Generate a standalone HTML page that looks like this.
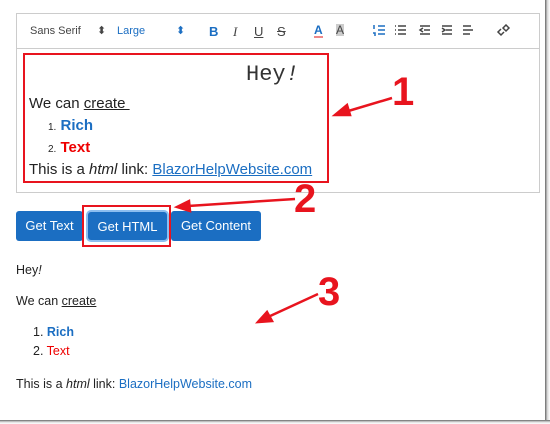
<!DOCTYPE html>
<html><head><style>
*{box-sizing:border-box}
body{margin:0;width:550px;height:424px;background:#fff;font-family:"Liberation Sans",sans-serif;position:relative;overflow:hidden}
.a{position:absolute}
.tb{left:16px;top:13px;width:524px;height:36px;border:1px solid #ccc}
.ed{left:16px;top:48px;width:524px;height:145px;border:1px solid #ccc}
.t{font-size:11px;color:#444}
.btn{background:#1b6ec2;color:#fff;font-size:13px;border-radius:3px;height:30px;line-height:30px;text-align:center;top:211px}
.big{font-weight:bold;color:#e8141e;font-family:"Liberation Sans",sans-serif;font-size:40px}
</style></head><body>
<div class="a tb"></div>
<div class="a ed"></div>
<div class="a t" style="left:30px;top:25px">Sans Serif</div>
<div class="a t" style="left:97px;top:24px">⬍</div>
<div class="a t" style="left:117px;top:25px;color:#1b6ec2">Large</div>
<div class="a t" style="left:176px;top:24px;color:#1b6ec2">⬍</div>
<div class="a" style="left:209px;top:24px;font-weight:bold;font-size:13px;color:#1b6ec2">B</div>
<div class="a" style="left:233px;top:24px;font-style:italic;font-size:13px;color:#444;font-family:'Liberation Serif'">I</div>
<div class="a" style="left:254px;top:24px;text-decoration:underline;font-size:13px;color:#444">U</div>
<div class="a" style="left:277px;top:24px;text-decoration:line-through;font-size:13px;color:#444">S</div>
<div class="a" style="left:314px;top:24px;font-size:12px;color:#1b6ec2;font-weight:bold;border-bottom:2px solid #e88;line-height:12px">A</div>
<div class="a" style="left:336px;top:24px;font-size:12px;color:#444;background:#ccc;line-height:12px">A</div>
<svg class="a" style="left:372px;top:24px" width="140" height="14" stroke="#444" stroke-width="1.5" fill="none">
<path d="M6 2h7M6 6h7M6 10h7M2 1v4M1 9h2v3" stroke="#1b6ec2"/>
<path d="M26 2h8M26 6h8M26 10h8M23 2h1M23 6h1M23 10h1"/>
<path d="M48 2h10M52 6h6M48 10h10M51 4l-3 2 3 2"/>
<path d="M70 2h10M74 6h6M70 10h10M70 4l3 2-3 2"/>
<path d="M91 2h8M91 6h10M91 10h7"/>
<path d="M131 4l3-3 3 3-3 3zM132 8l-3 3-3-3 3-3"/>
</svg>
<div class="a" style="left:23px;top:53px;width:306px;height:130px;border:2px solid #e8141e"></div>
<div class="a" style="left:246px;top:62px;font-family:'Liberation Mono';font-size:22px;color:#333">Hey<i>!</i></div>
<div class="a" style="left:29px;top:95px;font-size:15px;color:#222">We can <u>create&nbsp;</u></div>
<div class="a" style="left:48px;top:117px;font-size:15px;color:#1b6ec2;font-weight:bold"><span style="font-size:10px;color:#222;font-weight:normal">1.</span> Rich</div>
<div class="a" style="left:48px;top:139px;font-size:15px;color:#e00;font-weight:bold"><span style="font-size:10px;color:#222;font-weight:normal">2.</span> Text</div>
<div class="a" style="left:29px;top:161px;font-size:15px;color:#222">This is a <i>html</i> link: <u style="color:#1b6ec2">BlazorHelpWebsite.com</u></div>
<div class="a btn" style="left:16px;width:67px">Get Text</div>
<div class="a" style="left:82px;top:205px;width:89px;height:42px;border:2px solid #e8141e"></div>
<div class="a btn" style="left:88px;width:79px;box-shadow:0 0 0 2px #8cbef0;height:28px;top:212px">Get HTML</div>
<div class="a btn" style="left:171px;width:90px">Get Content</div>
<div class="a" style="left:16px;top:263px;font-size:12.5px;color:#222">Hey<i>!</i></div>
<div class="a" style="left:16px;top:294px;font-size:12.5px;color:#222">We can <u>create</u></div>
<div class="a" style="left:33px;top:325px;font-size:12.5px;color:#222">1. <b style="color:#1b6ec2">Rich</b></div>
<div class="a" style="left:33px;top:344px;font-size:12.5px;color:#222">2. <span style="color:#e00">Text</span></div>
<div class="a" style="left:16px;top:377px;font-size:12.5px;color:#222">This is a <i>html</i> link: <span style="color:#1b6ec2">BlazorHelpWebsite.com</span></div>
<div class="a big" style="left:392px;top:70px">1</div>
<div class="a big" style="left:294px;top:177px">2</div>
<div class="a big" style="left:318px;top:270px">3</div>
<svg class="a" style="left:0;top:0" width="550" height="424" stroke="#e8141e" stroke-width="2.5" fill="#e8141e">
<path d="M392 98L345 112" fill="none"/><path d="M335 115l12-10 3 10z"/>
<path d="M295 199L188 206" fill="none"/><path d="M177 207l12-6 1 10z"/>
<path d="M318 294L268 317" fill="none"/><path d="M258 322l9-10 5 9z"/>
</svg>
<div class="a" style="left:545px;top:0;width:5px;height:424px;background:linear-gradient(90deg,#666,#ddd 50%,#fff)"></div>
<div class="a" style="left:0;top:420px;width:550px;height:4px;background:linear-gradient(#666,#ddd 50%,#fff)"></div>
</body></html>
